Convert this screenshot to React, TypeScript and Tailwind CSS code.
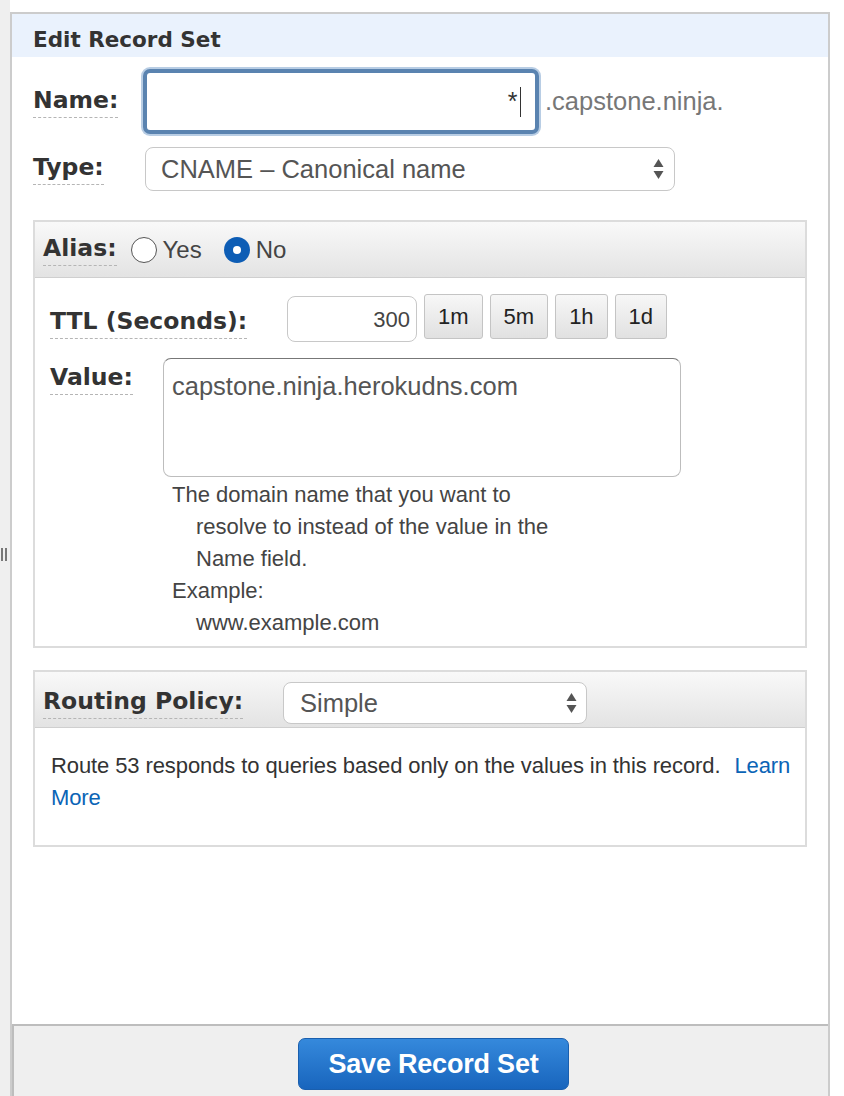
const sans = "font-['Liberation_Sans',Arial,sans-serif]"
const verdana = "font-['DejaVu_Sans',Verdana,sans-serif] font-bold text-[#333]"

// small up/down arrows used inside the native-looking selects
function SelectArrows() {
  return (
    <svg width="11" height="22" viewBox="0 0 11 22" className="shrink-0">
      <path d="M5.5 1 L10.5 9 L0.5 9 Z" fill="#555" />
      <path d="M5.5 21 L10.5 13 L0.5 13 Z" fill="#555" />
    </svg>
  )
}

function Label(props: { children: React.ReactNode; className?: string }) {
  return (
    <span
      className={`${verdana} inline-block border-b border-dashed border-[#b5b5b5] pb-[3px] text-[23.5px] leading-[28px] ${props.className ?? ""}`}
    >
      {props.children}
    </span>
  )
}

function Radio(props: { checked?: boolean; label: string }) {
  return (
    <label className="flex items-center gap-[6px]">
      {props.checked ? (
        <span className="flex h-[26px] w-[26px] items-center justify-center rounded-full bg-[#0d5db5]">
          <span className="h-[8px] w-[8px] rounded-full bg-white" />
        </span>
      ) : (
        <span className="h-[26px] w-[26px] rounded-full border-[1.5px] border-[#555] bg-white" />
      )}
      <span className={`${sans} text-[24px] text-[#444]`}>{props.label}</span>
    </label>
  )
}

const ttlButtons = ["1m", "5m", "1h", "1d"]

export default function App() {
  return (
    <div className="flex h-[1096px] w-[844px] overflow-hidden bg-white">
      {/* left gutter with the resize grip */}
      <div className="flex w-[10px] shrink-0 flex-col bg-[#efefef]">
        <div className="mt-[548px] flex gap-[2px] pl-[1px]">
          <span className="h-[13px] w-[2px] bg-[#777]" />
          <span className="h-[13px] w-[2px] bg-[#777]" />
        </div>
      </div>

      <div className="mt-[12px] flex w-[820px] shrink-0 flex-col border-x-2 border-t-2 border-[#cccccc]">
        <div className="flex h-[43px] items-center bg-[#eaf2fd] pl-[21px] pt-[10px]">
          <h2 className={`${verdana} text-[21.5px] text-[#3d3d3d]`}>Edit Record Set</h2>
        </div>

        <div className="flex flex-1 flex-col px-[21px] pt-[10px]">
          {/* Name */}
          <div className="flex items-center">
            <div className="w-[108px]">
              <Label>Name:</Label>
            </div>
            <div className="rounded-[9px] bg-[#b8cde4] p-[2px]">
              <div className="flex h-[65px] w-[396px] items-center justify-end rounded-[7px] border-[4px] border-[#5a83b0] bg-white pr-[14px]">
                <span className={`${sans} text-[25px] text-[#333]`}>*</span>
                <span className="ml-[2px] h-[30px] w-[1.5px] bg-[#333]" />
              </div>
            </div>
            <span className={`${sans} ml-[4px] text-[25.5px] text-[#777]`}>.capstone.ninja.</span>
          </div>

          {/* Type */}
          <div className="mt-[11px] flex items-center">
            <div className="w-[112px]">
              <Label>Type:</Label>
            </div>
            <div className="flex h-[44px] w-[530px] items-center justify-between rounded-[8px] border border-[#c8c8c8] bg-white pl-[15px] pr-[10px]">
              <span className={`${sans} text-[25.5px] text-[#555]`}>CNAME – Canonical name</span>
              <SelectArrows />
            </div>
          </div>

          {/* Alias box */}
          <div className="mt-[29px] flex h-[428px] flex-col border-2 border-[#dcdcdc]">
            <div className="flex h-[56px] shrink-0 items-center gap-[14px] border-b border-[#cfcfcf] bg-gradient-to-b from-[#f9f9f9] to-[#e3e3e3] pl-[8px]">
              <Label>Alias:</Label>
              <div className="flex items-center gap-[22px]">
                <Radio label="Yes" />
                <Radio checked label="No" />
              </div>
            </div>

            <div className="flex flex-col pl-[15px]">
              <div className="mt-[12px] flex items-center">
                <div className="w-[237px] pt-[14px]">
                  <Label>TTL (Seconds):</Label>
                </div>
                <div className="mt-[6px] flex h-[46px] w-[130px] items-center justify-end rounded-[8px] border border-[#c8c8c8] bg-white pr-[6px]">
                  <span className={`${sans} text-[22px] text-[#444]`}>300</span>
                </div>
                <div className="ml-[7px] flex gap-[7px]">
                  {ttlButtons.map((b) => (
                    <button
                      key={b}
                      className={`${sans} h-[45px] rounded-[3px] border border-[#c4c4c4] bg-gradient-to-b from-[#f7f7f7] to-[#e1e1e1] px-[13px] text-[22px] text-[#222]`}
                    >
                      {b}
                    </button>
                  ))}
                </div>
              </div>

              <div className="mt-[16px] flex items-start">
                <div className="w-[113px] pt-[5px]">
                  <Label>Value:</Label>
                </div>
                <div className="flex flex-col">
                  <div
                    className={`${sans} h-[119px] w-[518px] rounded-[8px] border border-[#bdbdbd] border-t-[#777] bg-white px-[8px] pt-[12px] text-[25.5px] leading-[30px] text-[#555]`}
                  >
                    capstone.ninja.herokudns.com
                  </div>
                  <div className={`${sans} pl-[9px] pt-[2px] text-[22px] leading-[32px] text-[#444]`}>
                    <p>The domain name that you want to</p>
                    <p className="pl-[24px]">resolve to instead of the value in the</p>
                    <p className="pl-[24px]">Name field.</p>
                    <p>Example:</p>
                    <p className="pl-[24px]">www.example.com</p>
                  </div>
                </div>
              </div>
            </div>
          </div>

          {/* Routing policy box */}
          <div className="mt-[22px] flex h-[177px] flex-col border-2 border-[#dcdcdc]">
            <div className="flex h-[56px] shrink-0 items-start border-b border-[#cfcfcf] bg-gradient-to-b from-[#f9f9f9] to-[#e3e3e3] pl-[8px]">
              <div className="mt-[15px] w-[240px]">
                <Label>Routing Policy:</Label>
              </div>
              <div className="mt-[10px] flex h-[42px] w-[304px] items-center justify-between rounded-[8px] border border-[#c8c8c8] bg-white pl-[16px] pr-[9px]">
                <span className={`${sans} text-[25.5px] text-[#555]`}>Simple</span>
                <SelectArrows />
              </div>
            </div>
            <p className={`${sans} pl-[16px] pr-[2px] pt-[22px] text-[22px] leading-[32px] tracking-[-0.1px] text-[#333]`}>
              Route 53 responds to queries based only on the values in this record.
              <a className="ml-[14px] text-[#0b64b6]">Learn</a> <a className="text-[#0b64b6]">More</a>
            </p>
          </div>
        </div>

        <div className="flex h-[72px] shrink-0 justify-center border-l-2 border-t-2 border-[#bdbdbd] bg-[#efefef] pl-[25px] pt-[12px]">
          <button
            className={`${sans} h-[52px] w-[271px] rounded-[7px] border border-[#1a5fae] bg-gradient-to-b from-[#3589dc] to-[#1865bd] text-[27px] font-bold tracking-[-0.2px] text-white`}
          >
            Save Record Set
          </button>
        </div>
      </div>
    </div>
  )
}
